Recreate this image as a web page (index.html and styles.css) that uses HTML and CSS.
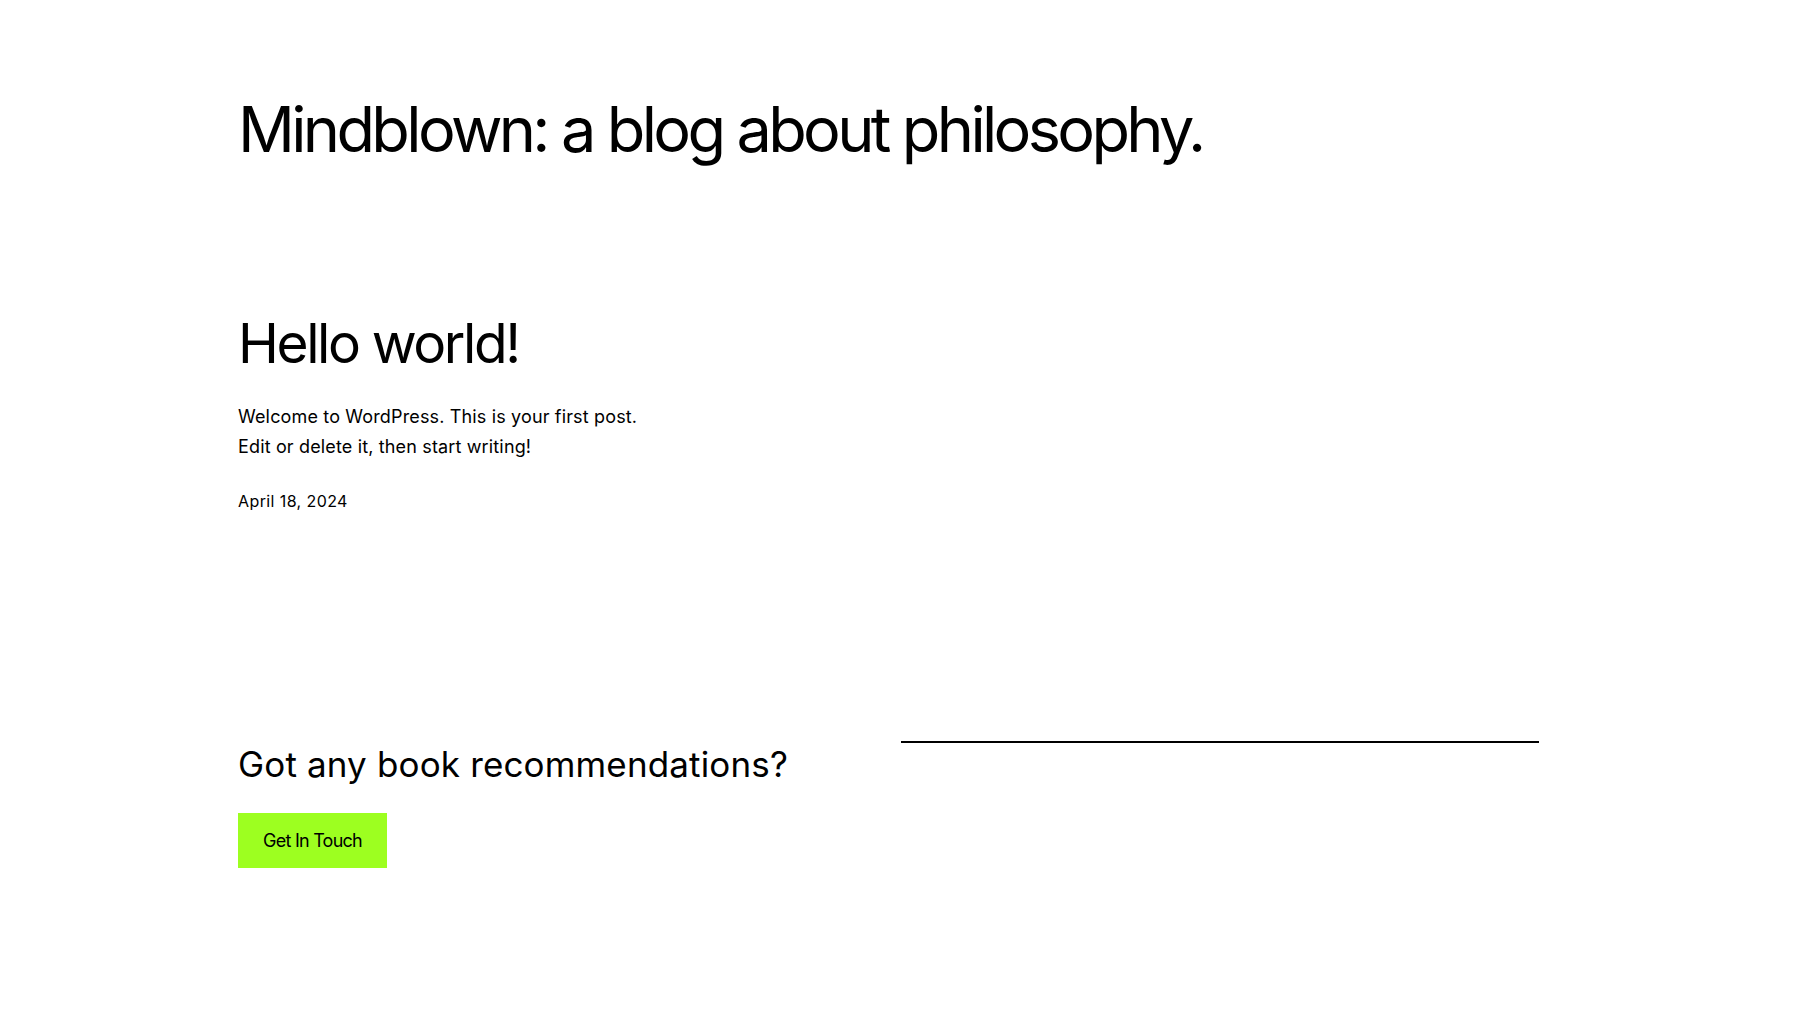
FILE: index.html
```html
<!DOCTYPE html>
<html lang="en">
<head>
<meta charset="utf-8">
<title>Mindblown</title>
<link rel="stylesheet" href="styles.css">
</head>
<body>
<div class="page">
  <header class="site-header">
    <h1 class="site-title">Mindblown: a blog about philosophy.</h1>
  </header>
  <main class="posts">
    <article class="post">
      <h2 class="post-title">Hello world!</h2>
      <p class="post-excerpt">Welcome to WordPress. This is your first post.<br>Edit or delete it, then start writing!</p>
      <div class="post-date">April 18, 2024</div>
    </article>
  </main>
  <section class="cta">
    <div class="cta-left">
      <h2 class="cta-title">Got any book recommendations?</h2>
      <a class="cta-button" href="#">Get In Touch</a>
    </div>
    <div class="cta-right">
      <hr class="separator">
    </div>
  </section>
</div>
</body>
</html>
```
FILE: styles.css
```css
* { box-sizing: border-box; }
html, body { margin: 0; padding: 0; background: #fff; }
body {
  font-family: Inter, "Noto Sans", sans-serif;
  color: #000;
}
.page {
  padding: 0 238px;
}
.site-header {
  padding-top: 92px;
}
.site-title {
  margin: 0;
  font-size: 63px;
  font-weight: 400;
  line-height: 1.2;
  letter-spacing: -3.65px;
}
.posts {
  padding-top: 142px;
}
.post-title {
  margin: 0;
  font-size: 55px;
  font-weight: 400;
  line-height: 1.2;
  letter-spacing: -2.4px;
}
.post-excerpt {
  margin: 26px 0 0;
  font-size: 18px;
  line-height: 30px;
  letter-spacing: 0.15px;
}
.post-date {
  margin-top: 27px;
  font-size: 16px;
  line-height: 25.6px;
  letter-spacing: 0.4px;
}
.cta {
  margin-top: 227px;
  display: grid;
  grid-template-columns: 623px 638px;
  column-gap: 40px;
  align-items: start;
}
.cta-title {
  margin: 2px 0 0;
  font-size: 35px;
  font-weight: 400;
  line-height: 1.2;
  letter-spacing: 0.15px;
}
.cta-button {
  display: inline-block;
  margin-top: 28px;
  background: #9dff20;
  color: #000;
  text-decoration: none;
  font-size: 18px;
  line-height: 25px;
  padding: 15px 25px;
  letter-spacing: -0.75px;
}
.separator {
  margin: 0;
  border: 0;
  height: 2px;
  background: #000;
}
```
